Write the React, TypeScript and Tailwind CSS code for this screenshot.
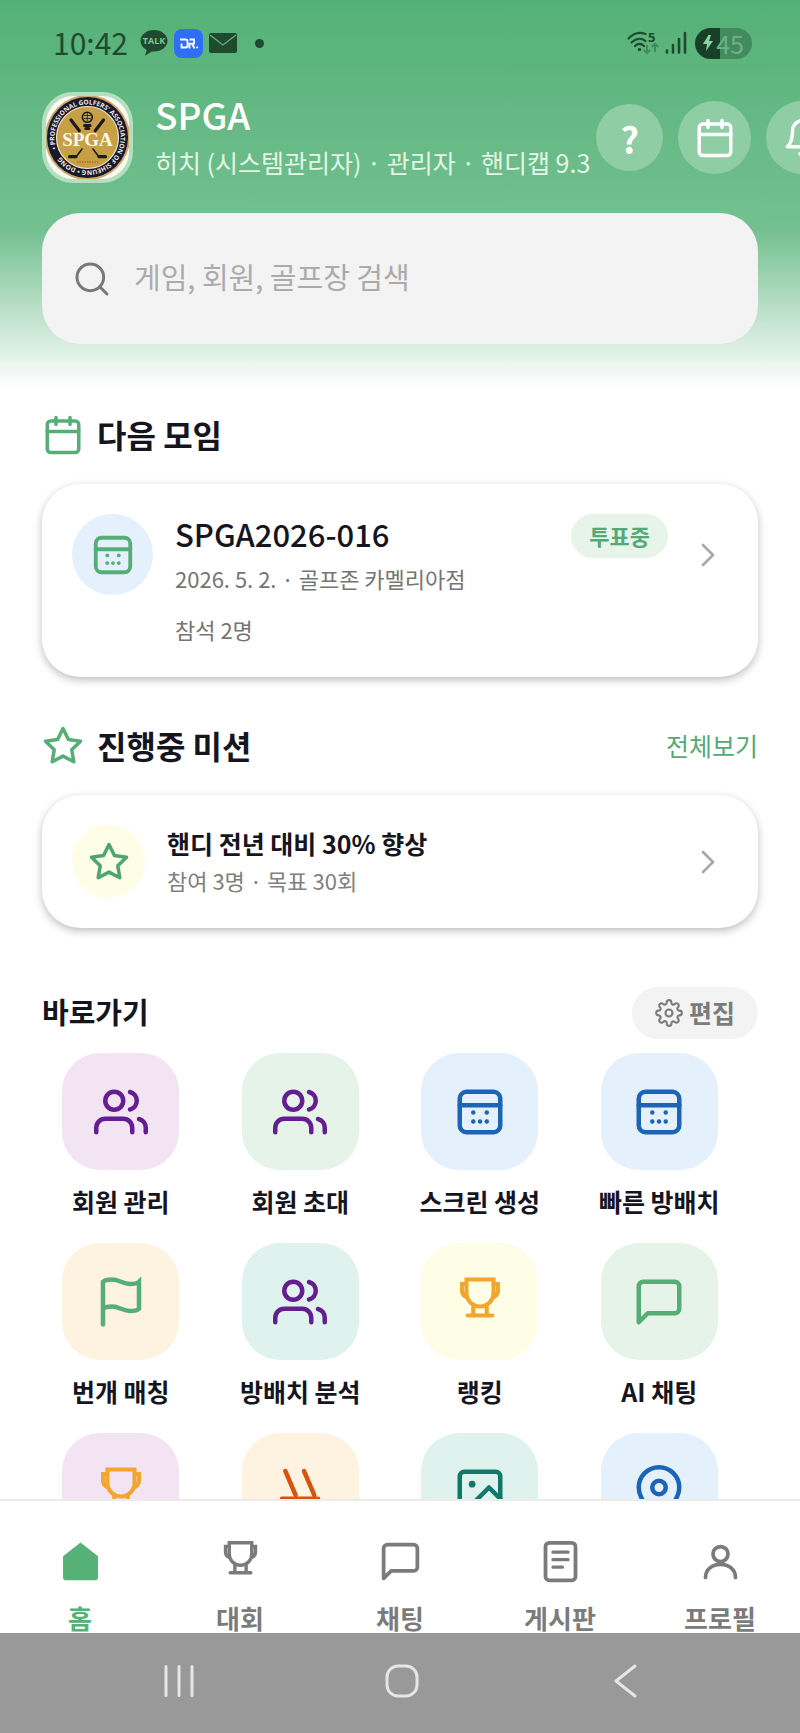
import React from 'react';
import { clsx } from 'clsx';

type IconProps = { className?: string; strokeWidth?: number };

const Svg = ({ className, strokeWidth = 2, children }: IconProps & { children: React.ReactNode }) => (
  <svg
    viewBox="0 0 24 24"
    fill="none"
    stroke="currentColor"
    strokeWidth={strokeWidth}
    strokeLinecap="round"
    strokeLinejoin="round"
    className={clsx('shrink-0', className)}
    aria-hidden="true"
  >
    {children}
  </svg>
);

const CalendarIcon = (props: IconProps) => (
  <Svg {...props}>
    <rect x="3" y="4" width="18" height="18" rx="2" />
    <path d="M16 2v4M8 2v4M3 10h18" />
  </Svg>
);

const ScheduleIcon = (props: IconProps) => (
  <Svg {...props}>
    <rect x="3" y="3" width="18" height="18" rx="3" />
    <path d="M3 9h18" />
    <g fill="currentColor" stroke="none">
      <circle cx="9" cy="12.2" r="1" />
      <circle cx="15" cy="12.2" r="1" />
      <circle cx="9" cy="16.2" r="1" />
      <circle cx="12" cy="16.2" r="1" />
      <circle cx="15" cy="16.2" r="1" />
    </g>
  </Svg>
);

const BellIcon = (props: IconProps) => (
  <Svg {...props}>
    <path d="M18 8A6 6 0 0 0 6 8c0 7-3 9-3 9h18s-3-2-3-9M13.73 21a2 2 0 0 1-3.46 0" />
  </Svg>
);

const SearchIcon = (props: IconProps) => (
  <Svg {...props}>
    <circle cx="11" cy="11" r="8" />
    <path d="m21 21-4.35-4.35" />
  </Svg>
);

const StarIcon = (props: IconProps) => (
  <Svg {...props}>
    <path d="m12 2 3.09 6.26L22 9.27l-5 4.87 1.18 6.88L12 17.77l-6.18 3.25L7 14.14 2 9.27l6.91-1.01z" />
  </Svg>
);

const ChevronIcon = (props: IconProps) => (
  <Svg {...props}>
    <path d="m9 18 6-6-6-6" />
  </Svg>
);

const GearIcon = (props: IconProps) => (
  <Svg {...props}>
    <circle cx="12" cy="12" r="3" />
    <path d="M19.4 15a1.65 1.65 0 0 0 .33 1.82l.06.06a2 2 0 1 1-2.83 2.83l-.06-.06a1.65 1.65 0 0 0-2.8 1.17V21a2 2 0 0 1-4 0v-.09A1.65 1.65 0 0 0 7.1 19.73l-.06.06a2 2 0 1 1-2.83-2.83l.06-.06A1.65 1.65 0 0 0 3.09 14H3a2 2 0 0 1 0-4h.09A1.65 1.65 0 0 0 4.27 7.1l-.06-.06a2 2 0 1 1 2.83-2.83l.06.06A1.65 1.65 0 0 0 10 3.09V3a2 2 0 0 1 4 0v.09a1.65 1.65 0 0 0 2.9 1.18l.06-.06a2 2 0 1 1 2.83 2.83l-.06.06A1.65 1.65 0 0 0 20.91 10H21a2 2 0 0 1 0 4h-.09a1.65 1.65 0 0 0-1.51 1z" />
  </Svg>
);

const UsersIcon = (props: IconProps) => (
  <Svg {...props}>
    <path d="M17 21v-2a4 4 0 0 0-4-4H5a4 4 0 0 0-4 4v2" />
    <circle cx="9" cy="7" r="4" />
    <path d="M23 21v-2a4 4 0 0 0-3-3.87M16 3.13a4 4 0 0 1 0 7.75" />
  </Svg>
);

const FlagIcon = (props: IconProps) => (
  <Svg {...props}>
    <path d="M4 15s1-1 4-1 5 2 8 2 4-1 4-1V3s-1 1-4 1-5-2-8-2-4 1-4 1zM4 22v-7" strokeLinejoin="miter" />
  </Svg>
);

const TrophyIcon = (props: IconProps) => (
  <Svg strokeWidth={1.8} {...props}>
    <path d="M6 2h12v6a6 6 0 0 1-12 0zM6 4H4v3c0 1.4.9 2.4 2.2 3M18 4h2v3c0 1.4-.9 2.4-2.2 3" strokeLinejoin="miter" />
    <path d="M9 14v4M15 14v4M6.500 18h11" />
  </Svg>
);

const ChatIcon = (props: IconProps) => (
  <Svg {...props}>
    <path d="M21 15a2 2 0 0 1-2 2H7l-4 4V5a2 2 0 0 1 2-2h14a2 2 0 0 1 2 2z" />
  </Svg>
);

const SlopeIcon = (props: IconProps) => (
  <Svg {...props}>
    <path d="m5.500 2.700 4.500 10.600M13.800 2.700l4.500 10.600M4 15h16" />
  </Svg>
);

const ImageIcon = (props: IconProps) => (
  <Svg {...props}>
    <rect x="3" y="3" width="18" height="18" rx="2" />
    <circle cx="8.5" cy="8.5" r="1.5" fill="currentColor" stroke="none" />
    <path d="m21 15-5-5L5 21" />
  </Svg>
);

const PinIcon = (props: IconProps) => (
  <Svg {...props}>
    <path d="M21 10c0 7-9 13-9 13s-9-6-9-13a9 9 0 0 1 18 0z" />
    <circle cx="12" cy="10" r="3" />
  </Svg>
);

const HomeIcon = ({ className }: IconProps) => (
  <svg viewBox="0 0 24 24" fill="currentColor" className={className} aria-hidden="true">
    <path d="m2.700 9.200 9.300-7.400 9.300 7.400v11.300a1.500 1.500 0 0 1-1.500 1.500H4.200a1.500 1.500 0 0 1-1.500-1.500z" />
  </svg>
);

const BoardIcon = (props: IconProps) => (
  <Svg {...props}>
    <rect x="4" y="2" width="16" height="20" rx="2" />
    <path d="M8 7h8M8 11h8M8 15h5" strokeWidth="1.800" />
  </Svg>
);

const ProfileIcon = (props: IconProps) => (
  <Svg {...props}>
    <circle cx="12" cy="8" r="4" />
    <path d="M4 20.500c0-4.200 3.600-7 8-7s8 2.800 8 7" />
  </Svg>
);

const ClubLogo = () => (
  <svg viewBox="0 0 83 83" className="h-full w-full" role="img" aria-label="SPGA">
    <defs>
      <path id="ring" d="M74.500 41.500a33 33 0 1 1-66 0a33 33 0 1 1 66 0" />
    </defs>
    <rect width="83" height="83" fill="#fbf8f2" />
    <circle cx="41.500" cy="41.500" r="42.500" fill="#c9a669" />
    <circle cx="41.500" cy="41.500" r="40.500" fill="#17182a" />
    <circle cx="41.500" cy="41.500" r="31" fill="#c79f45" stroke="#efe6d2" strokeWidth="1.200" />
    <g transform="rotate(160 41.500 41.500)">
      <text fill="#eceae6" className="font-['Open_Sans',sans-serif] text-[6.5px] font-bold">
        <textPath href="#ring">• PROFESSIONAL GOLFERS' ASSOCIATION OF SIHEUNG • DONG</textPath>
      </text>
    </g>
    <g stroke="#1b1a1c" fill="none" strokeLinecap="round">
      <path d="M25 24l8.300 10.700M57.500 24l-8.300 10.700" strokeWidth="3.200" />
      <path d="M36 53l-6 8M47 53l6 8" strokeWidth="1.600" />
      <path d="M30 60.700h-6.500M53 60.700h6.500" strokeWidth="3.200" />
      <circle cx="41.300" cy="21.300" r="5" strokeWidth="1.600" />
      <path d="M38 19.500h6.500M38 22.500h6.500M41.300 17v8" strokeWidth=".8" />
      <path d="M38.500 29.500h5.600M39.800 32.500h3" strokeWidth="3" />
    </g>
    <text
      x="41.500"
      y="49.500"
      textAnchor="middle"
      fill="#faf6ea"
      className="font-['Liberation_Serif',serif] text-[19px] font-bold"
    >
      SPGA
    </text>
    <path d="M31 66h21" stroke="#b9743a" strokeWidth="2" strokeDasharray="1.500 1" />
  </svg>
);

const StatusBar = () => (
  <div className="flex h-[86px] items-center justify-between pl-[53px] pr-12 text-[#1f4a2f]">
    <div className="flex items-center">
      <span className="pb-0.5 text-[30px] leading-none">10:42</span>
      <svg viewBox="0 0 28 28" className="ml-3 h-7 w-7 overflow-visible" aria-hidden="true">
        <path d="M14 1C6.500 1 .5 5.800.5 11.800c0 3.900 2.500 7.200 6.200 9.100L5 26.800l6.800-4.300c.7.1 1.500.1 2.200.1 7.500 0 13.500-4.800 13.500-10.800S21.500 1 14 1z" fill="currentColor" />
        <text x="14" y="15" textAnchor="middle" fill="#7cc795" className="font-['Open_Sans',sans-serif] text-[9px] font-bold">
          TALK
        </text>
      </svg>
      <svg viewBox="0 0 29 29" className="ml-1.5 h-[29px] w-[29px]" aria-hidden="true">
        <rect width="29" height="29" rx="8" fill="#2f6ef7" />
        <g fill="none" stroke="#fff" strokeWidth="1.800">
          <path d="M6 10.500h5.500q2 0 2 2v4q0 2-2 2H7.500v-4M15.500 10.500h4.500v4.200h-4.500M15.500 13.800v5.700M18 14.700l2.500 4.800" />
        </g>
        <rect x="22.300" y="17.500" width="1.800" height="1.800" fill="#fff" />
      </svg>
      <svg viewBox="0 0 28 20" className="ml-1.5 h-5 w-7" aria-hidden="true">
        <rect width="28" height="20" rx="2" fill="currentColor" />
        <path d="m1 2 13 10L27 2" fill="none" stroke="#5fb67f" strokeWidth="1.200" />
      </svg>
      <span className="ml-[18px] h-[9px] w-[9px] rounded-full bg-[#1f4a2f]" />
    </div>
    <div className="flex items-center">
      <svg viewBox="0 0 32 24" className="h-6 w-8 overflow-visible" aria-hidden="true">
        <g fill="none" stroke="currentColor" strokeWidth="2.200" strokeLinecap="round">
          <path d="M1.500 7.500C6.500 2 13 .8 18.500 3M4.500 11.500c4.500-4.500 10-4.700 14-1.500M8 15c2.800-2.500 6.300-2.500 9 0" />
        </g>
        <circle cx="12.500" cy="18.500" r="1.700" fill="currentColor" />
        <g stroke="#3f8a5b" strokeWidth="2" fill="none">
          <path d="M20 14v8M16.800 19l3.200 3.200 3.200-3.200M28 21v-8M24.800 16l3.200-3.200 3.200 3.200" />
        </g>
        <text x="21" y="11" fill="currentColor" className="font-['Open_Sans',sans-serif] text-[13px] font-bold">
          5
        </text>
      </svg>
      <svg viewBox="0 0 22 24" className="ml-1.5 h-6 w-[22px]" aria-hidden="true">
        <path d="M2 19.500v2M8 14v7.500M14 8v13.500M20 2v19.500" stroke="currentColor" strokeWidth="2.600" strokeLinecap="round" />
      </svg>
      <span className="ml-2 flex h-[31px] items-center rounded-full bg-[linear-gradient(to_right,#193f27_25px,#438a5e_25px)] pl-[7px] pr-2 text-[25px] leading-[29px] text-[#6bb386]">
        <svg viewBox="0 0 12 16" className="mr-0.5 h-4 w-3" aria-hidden="true">
          <path d="M6.500 0 1 9h4l-1 7 7-10H7l2-6z" fill="#8bd3a3" />
        </svg>
        45
      </span>
    </div>
  </div>
);

const Header = () => (
  <header className="bg-[linear-gradient(to_bottom,#54b176_0%,#74c091_58%,#ffffff_98%)] pb-[53px]">
    <StatusBar />
    <div className="flex items-center overflow-hidden pl-[42px] pt-1.5">
      <div className="h-[91px] w-[91px] shrink-0 rounded-[31px] bg-[#b4e0c2] p-1">
        <div className="h-full w-full overflow-hidden rounded-[27px]">
          <ClubLogo />
        </div>
      </div>
      <div className="ml-[22px] shrink-0 whitespace-nowrap">
        <h1 className="text-[37px] font-medium leading-[44px] text-white">SPGA</h1>
        <p className="mt-[5px] text-[25px] leading-[42px] text-[#e4f6e6]">히치 (시스템관리자) · 관리자 · 핸디캡 9.3</p>
      </div>
      <div className="ml-1.5 flex items-center gap-[15px] text-white">
        <button className="h-[67px] w-[67px] shrink-0 rounded-full bg-[#8fcda4] text-[36px] font-bold leading-none">?</button>
        <button aria-label="일정" className="flex h-[73px] w-[73px] shrink-0 items-center justify-center rounded-full bg-[#8fcda4]">
          <CalendarIcon className="h-[42px] w-[42px]" />
        </button>
        <button aria-label="알림" className="flex h-[73px] w-[73px] shrink-0 items-center justify-center rounded-full bg-[#8fcda4]">
          <BellIcon className="h-[42px] w-[42px]" />
        </button>
      </div>
    </div>
    <label className="mx-[42px] mt-[30px] flex h-[131px] items-center gap-[22px] rounded-[38px] bg-[#f3f3f3] px-[30px]">
      <SearchIcon className="h-10 w-10 text-[#787878]" strokeWidth={1.8} />
      <input
        type="search"
        aria-label="검색"
        placeholder="게임, 회원, 골프장 검색"
        className="min-w-0 flex-1 bg-transparent pb-1 text-[29px] outline-none placeholder:text-[#ababab]"
      />
    </label>
  </header>
);

const SectionTitle = ({ icon, title, link }: { icon: React.ReactNode; title: string; link?: string }) => (
  <div className="flex h-[42px] items-center gap-[13px]">
    {icon}
    <h2 className="pb-0.5 text-[32px] font-bold leading-none text-[#15151f]">{title}</h2>
    {link && (
      <a href="#missions" className="ml-auto pb-0.5 text-[25px] leading-none text-[#55a976]">
        {link}
      </a>
    )}
  </div>
);

const cardStyle = 'mt-7 flex w-full rounded-[38px] bg-white px-[30px] text-left shadow-[0_3px_9px_rgba(0,0,0,0.26)]';

const shortcuts = [
  { label: '회원 관리', icon: UsersIcon, bg: 'bg-[#f3e4f4]', color: 'text-[#651d92]' },
  { label: '회원 초대', icon: UsersIcon, bg: 'bg-[#e6f3e8]', color: 'text-[#651d92]' },
  { label: '스크린 생성', icon: ScheduleIcon, bg: 'bg-[#e4f0fc]', color: 'text-[#1b64b8]' },
  { label: '빠른 방배치', icon: ScheduleIcon, bg: 'bg-[#e4f0fc]', color: 'text-[#1b64b8]' },
  { label: '번개 매칭', icon: FlagIcon, bg: 'bg-[#fef2e0]', color: 'text-[#56ae77]' },
  { label: '방배치 분석', icon: UsersIcon, bg: 'bg-[#dff2ee]', color: 'text-[#651d92]' },
  { label: '랭킹', icon: TrophyIcon, bg: 'bg-[#fefde6]', color: 'text-[#f2a62d]' },
  { label: 'AI 채팅', icon: ChatIcon, bg: 'bg-[#e6f3e8]', color: 'text-[#56ae77]' },
];

const moreShortcuts = [
  { name: '대회', icon: TrophyIcon, bg: 'bg-[#f3e4f4]', color: 'text-[#f2a62d]' },
  { name: '경사', icon: SlopeIcon, bg: 'bg-[#fef2e0]', color: 'text-[#d9530f]' },
  { name: '사진', icon: ImageIcon, bg: 'bg-[#dff2ee]', color: 'text-[#12796a]' },
  { name: '골프장', icon: PinIcon, bg: 'bg-[#e4f0fc]', color: 'text-[#1b64b8]' },
];

const tabs = [
  { label: '홈', icon: HomeIcon, active: true },
  { label: '대회', icon: TrophyIcon },
  { label: '채팅', icon: ChatIcon },
  { label: '게시판', icon: BoardIcon },
  { label: '프로필', icon: ProfileIcon },
];

const App = () => {
  return (
    <div className="flex h-screen flex-col overflow-hidden bg-white font-['Noto_Sans_CJK_KR',sans-serif] text-[#15151f]">
      <main className="min-h-0 flex-1 overflow-y-auto [scrollbar-width:none]">
        <Header />

        <section className="px-[42px] pt-[17px]">
          <SectionTitle icon={<CalendarIcon className="h-[42px] w-[42px] text-[#56ae77]" />} title="다음 모임" />
          <button className={clsx(cardStyle, 'py-[30px]')}>
            <span className="flex h-[81px] w-[81px] shrink-0 items-center justify-center rounded-full bg-[#e4f1fd]">
              <ScheduleIcon className="h-[46px] w-[46px] text-[#56ae77]" />
            </span>
            <span className="ml-[22px] flex-1">
              <span className="block text-[31px] font-medium leading-10">SPGA2026-016</span>
              <span className="block text-[22px] leading-[48px] text-[#757575]">2026. 5. 2. · 골프존 카멜리아점</span>
              <span className="mt-[9px] block text-[22px] leading-9 text-[#757575]">참석 2명</span>
            </span>
            <span className="flex h-11 items-center rounded-full bg-[#e6f4e9] px-[18px] pb-0.5 text-[22px] font-bold leading-none text-[#55a976]">
              투표중
            </span>
            <span className="ml-5 flex h-[81px] items-center">
              <ChevronIcon className="h-10 w-10 text-[#a8a8a8]" strokeWidth={1.6} />
            </span>
          </button>
        </section>

        <section className="px-[42px] pt-12">
          <SectionTitle icon={<StarIcon className="h-[42px] w-[42px] text-[#56ae77]" />} title="진행중 미션" link="전체보기" />
          <button className={clsx(cardStyle, 'items-center py-[30px]')}>
            <span className="flex h-[73px] w-[73px] shrink-0 items-center justify-center rounded-full bg-[#fefde6]">
              <StarIcon className="h-[42px] w-[42px] text-[#4fa570]" />
            </span>
            <span className="ml-[22px] flex-1">
              <span className="block text-[25px] font-bold leading-[37px]">핸디 전년 대비 30% 향상</span>
              <span className="block text-[22px] leading-9 text-[#808080]">참여 3명 · 목표 30회</span>
            </span>
            <ChevronIcon className="h-10 w-10 text-[#a8a8a8]" strokeWidth={1.6} />
          </button>
        </section>

        <section className="pt-[59px]">
          <div className="flex items-center justify-between px-[42px]">
            <h2 className="pb-1 text-[29px] font-bold leading-none">바로가기</h2>
            <button className="flex h-[52px] items-center gap-1.5 rounded-full bg-[#f3f3f3] px-[23px] text-[25px] font-bold leading-none text-[#7b7b7b]">
              <GearIcon className="h-7 w-7" strokeWidth={1.8} />
              <span className="pb-0.5">편집</span>
            </button>
          </div>
          <div className="mt-3.5 grid grid-cols-4 gap-y-[23px] pl-[31px] pr-[51px]">
            {shortcuts.map(({ label, icon: Icon, bg, color }) => (
              <button key={label} className="flex flex-col items-center gap-3">
                <span className={clsx('flex h-[117px] w-[117px] items-center justify-center rounded-[38px]', bg, color)}>
                  <Icon className="h-[54px] w-[54px]" />
                </span>
                <span className="text-[25px] font-bold leading-[38px]">{label}</span>
              </button>
            ))}
            {moreShortcuts.map(({ name, icon: Icon, bg, color }) => (
              <button key={name} aria-label={name} className="flex flex-col items-center">
                <span className={clsx('flex h-[117px] w-[117px] items-center justify-center rounded-[38px]', bg, color)}>
                  <Icon className="h-[54px] w-[54px]" />
                </span>
              </button>
            ))}
          </div>
        </section>
      </main>

      <nav className="grid shrink-0 grid-cols-5 border-t-2 border-[#ebebeb] bg-white pt-[38px]">
        {tabs.map(({ label, icon: Icon, active }) => (
          <a
            key={label}
            href="#"
            className={clsx('flex flex-col items-center gap-[18px]', active ? 'text-[#56b177]' : 'text-[#7b7b7b]')}
          >
            <Icon className="h-[45px] w-[45px]" />
            <span className="text-[26px] font-bold leading-[31px]">{label}</span>
          </a>
        ))}
      </nav>

      <div className="grid h-[100px] shrink-0 grid-cols-3 items-center justify-items-center bg-[#999999] pb-1 pl-[68px] pr-[64px] text-[#e6e6e6]">
        <button aria-label="최근 앱">
          <svg viewBox="0 0 36 36" className="h-9 w-9" aria-hidden="true">
            <path d="M5 3.500v29M18 3.500v29M31 3.500v29" stroke="currentColor" strokeWidth="3" strokeLinecap="round" />
          </svg>
        </button>
        <button aria-label="홈 화면">
          <svg viewBox="0 0 36 36" className="h-9 w-9" aria-hidden="true">
            <rect x="3" y="3" width="30" height="30" rx="11" fill="none" stroke="currentColor" strokeWidth="3" />
          </svg>
        </button>
        <button aria-label="뒤로">
          <svg viewBox="0 0 36 36" className="h-9 w-9" aria-hidden="true">
            <path d="M28 3 9 18l19 15" fill="none" stroke="currentColor" strokeWidth="3" strokeLinecap="round" strokeLinejoin="round" />
          </svg>
        </button>
      </div>
    </div>
  );
};

export default App;
